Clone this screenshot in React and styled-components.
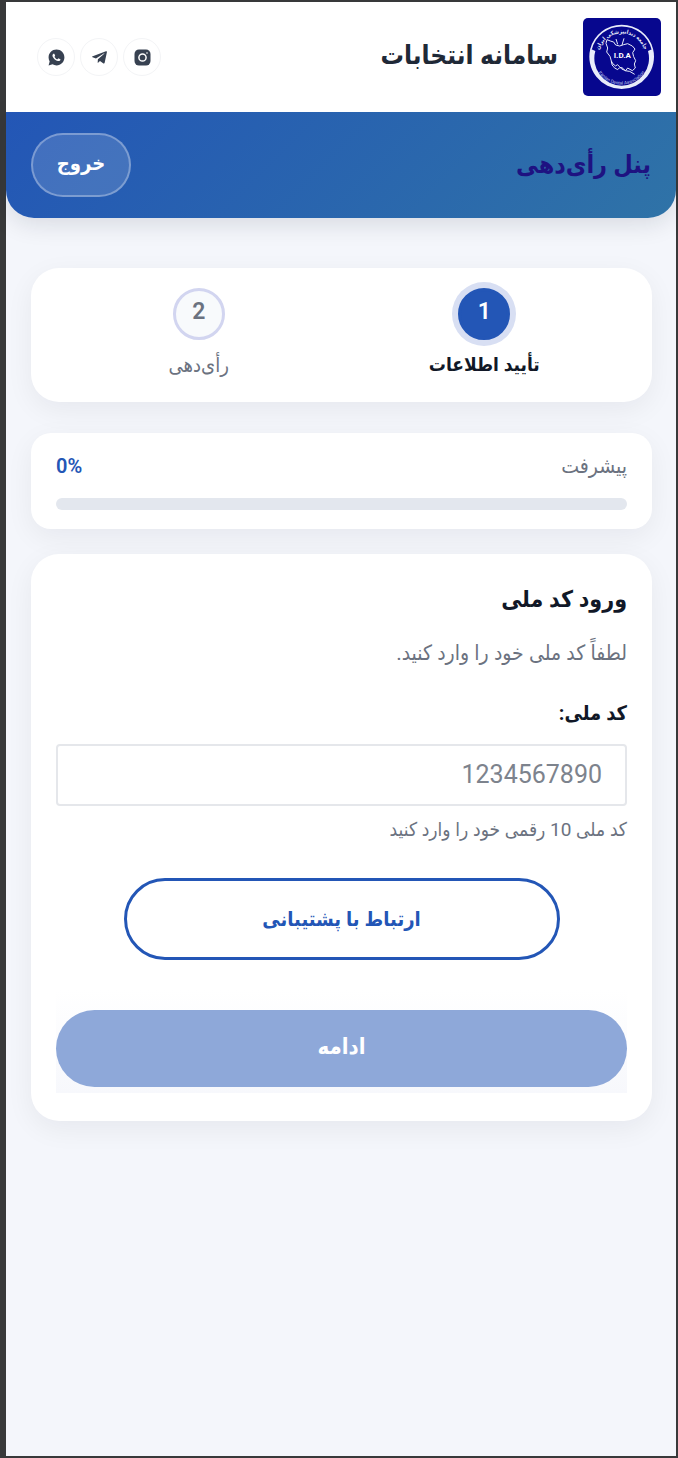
import React, { useState } from "react";
import styled, { createGlobalStyle } from "styled-components";
import { RiWhatsappFill } from "react-icons/ri";
import { FaTelegramPlane } from "react-icons/fa";

const GlobalStyle = createGlobalStyle`
  *, *::before, *::after { box-sizing: border-box; }
  body {
    margin: 0;
    background: #38393a;
    font-family: Roboto, "DejaVu Sans Condensed", "DejaVu Sans", sans-serif;
    color: #111827;
  }
  h1, h2, p { margin: 0; }
  button, input { font-family: inherit; }
`;

const Frame = styled.div`
  min-height: 100vh;
  display: flex;
  padding: 2px 2px 2px 6px;
`;

const Page = styled.div`
  flex: 1;
  min-width: 0;
  background: #f4f6fb;
`;

const SiteHeader = styled.header`
  position: relative;
  z-index: 1;
  display: flex;
  align-items: center;
  justify-content: space-between;
  height: 110px;
  padding: 0 15px 0 31px;
  background: #fff;
`;

const Brand = styled.div`
  display: flex;
  align-items: center;
  gap: 25px;
`;

const LogoMark = styled.svg`
  display: block;
  width: 78px;
  height: 78px;
`;

const BrandName = styled.span`
  padding-bottom: 4px;
  font-size: 26px;
  line-height: 36px;
  font-weight: 700;
  color: #1f2937;
`;

const SocialList = styled.nav`
  display: flex;
  gap: 5px;
`;

const SocialLink = styled.a`
  display: grid;
  place-items: center;
  width: 38px;
  height: 38px;
  border: 1px solid #f3f4f6;
  border-radius: 50%;
  color: #374151;
`;

const Hero = styled.section`
  display: flex;
  align-items: center;
  justify-content: space-between;
  padding: 21px 25px;
  border-radius: 0 0 28px 28px;
  background: linear-gradient(135deg, #2356b6, #2f73a7);
  box-shadow: 0 6px 24px rgba(15, 23, 42, 0.12);
`;

const HeroTitle = styled.h1`
  font-size: 25px;
  line-height: 36px;
  font-weight: 700;
  color: #1e1281;
`;

const LogoutButton = styled.button`
  width: 100px;
  height: 64px;
  padding: 0 0 4px;
  border: 2px solid rgba(255, 255, 255, 0.3);
  border-radius: 32px;
  background: rgba(255, 255, 255, 0.14);
  font-size: 20px;
  font-weight: 700;
  color: #fff;
`;

const Content = styled.main`
  padding: 50px 24px 40px 25px;
`;

const Card = styled.section`
  border-radius: ${(p) => p.$radius || 28}px;
  background: #fff;
  box-shadow: 0 8px 28px rgba(15, 23, 42, 0.06);
`;

const StepsCard = styled(Card)`
  padding: 20px 25px 22px;
  margin-bottom: 31px;
`;

const StepList = styled.ol`
  display: flex;
  margin: 0;
  padding: 0;
  list-style: none;
`;

const Step = styled.li`
  flex: 1;
  display: flex;
  flex-direction: column;
  align-items: center;
  gap: 10px;
`;

const StepNumber = styled.span`
  display: grid;
  place-items: center;
  width: 52px;
  height: 52px;
  padding-bottom: 5px;
  border: 3px solid ${(p) => (p.$active ? "#2356b6" : "#d2d5f0")};
  border-radius: 50%;
  background: ${(p) => (p.$active ? "#2356b6" : "#f8fafc")};
  box-shadow: ${(p) => (p.$active ? "0 0 0 6px #d8dff3" : "none")};
  font-size: 23px;
  font-weight: 600;
  color: ${(p) => (p.$active ? "#fff" : "#6b7280")};
`;

const StepLabel = styled.span`
  font-size: ${(p) => (p.$active ? 19 : 20)}px;
  line-height: 30px;
  font-weight: ${(p) => (p.$active ? 700 : 400)};
  color: ${(p) => (p.$active ? "#111827" : "#6b7280")};
`;

const ProgressCard = styled(Card)`
  padding: 18px 25px 19px;
  margin-bottom: 25px;
`;

const ProgressHead = styled.div`
  display: flex;
  align-items: center;
  justify-content: space-between;
  height: 30px;
  margin-bottom: 17px;
  font-size: 21px;
  color: #6b7280;
`;

const ProgressValue = styled.span`
  font-size: 20px;
  font-weight: 600;
  color: #2356b6;
`;

const ProgressTrack = styled.div`
  height: 12px;
  border-radius: 6px;
  background: #e3e7ee;
  overflow: hidden;
`;

const ProgressFill = styled.div`
  height: 100%;
  background: #2356b6;
`;

const FormCard = styled(Card)`
  padding: 28px 25px;
`;

const FormTitle = styled.h2`
  font-size: 23px;
  line-height: 36px;
  font-weight: 700;
`;

const FormLead = styled.p`
  margin-top: 20px;
  font-size: 21px;
  line-height: 30px;
  color: #6b7280;
`;

const FieldLabel = styled.label`
  display: block;
  margin-top: 30px;
  font-size: 20px;
  line-height: 30px;
  font-weight: 700;
`;

const TextInput = styled.input`
  display: block;
  width: 100%;
  height: 62px;
  margin-top: 16px;
  padding: 0 23px 2px;
  border: 2px solid #e5e7eb;
  border-radius: 4px;
  background: #fff;
  font-size: 25px;
  text-align: right;
  color: #111827;
  &::placeholder { color: #7d838d; opacity: 1; }
`;

const Hint = styled.p`
  margin-top: 9px;
  font-size: 19px;
  line-height: 30px;
  color: #6b7280;
`;

const SupportButton = styled.button`
  display: block;
  width: 436px;
  max-width: 100%;
  height: 82px;
  margin: 33px auto 0;
  padding: 0;
  border: 3px solid #2356b6;
  border-radius: 41px;
  background: #fff;
  font-size: 20px;
  font-weight: 700;
  color: #2356b6;
`;

const Actions = styled.div`
  margin-top: 30px;
  padding: 20px 0 6px;
  background: linear-gradient(#fff, #f7f8fc);
`;

const ContinueButton = styled.button`
  display: block;
  width: 100%;
  height: 77px;
  padding: 0 0 4px;
  border: 0;
  border-radius: 39px;
  background: #8ea8d9;
  font-size: 22px;
  font-weight: 700;
  color: #fff;
`;

function AssociationLogo() {
  return (
    <LogoMark viewBox="0 0 234 234" role="img" aria-label="جامعه دندانپزشکی ایران">
      <defs>
        <path id="logo-top" d="M45 117A71 71 0 0 1 187 117" />
        <path id="logo-bottom" d="M33 117A83 83 0 0 0 199 117" />
      </defs>
      <rect width="234" height="234" rx="15" fill="#07078e" />
      <path d="M24 94A95 95 0 0 1 208 94" fill="none" stroke="#e8ecfa" strokeWidth="5" />
      <path d="M22 92L37 99A82 82 0 1 0 195 99L210 92A97 97 0 1 1 22 92Z" fill="#e8ecfa" />
      <text fontSize="17" fontWeight="700" fill="#e8ecfa" textAnchor="middle" direction="rtl">
        <textPath href="#logo-top" startOffset="50%">جامعه دندانپزشکی ایران</textPath>
      </text>
      <text fontSize="14" fill="#c9d2f2" textAnchor="middle" direction="ltr">
        <textPath href="#logo-bottom" startOffset="50%">Iranian Dental Association</textPath>
      </text>
      <path
        d="M72 65L69 76 74 90 71 102 81 115 85 129 90 138 98 144 103 140 110 146 116 153 128 158 134 150 148 158 157 150 154 138 158 128 152 116 149 104 156 93 148 84 134 77 122 80 110 84 98 81 92 72 82 69ZM99 63L104 79M123 61L117 81M85 129Q84 146 104 155Q114 140 126 158Q140 157 155 169"
        fill="none"
        stroke="#e8ecfa"
        strokeWidth="3"
        strokeLinejoin="round"
      />
      <text x="118" y="119" fontSize="24" fontWeight="700" fill="#fff" textAnchor="middle" direction="ltr">
        I.D.A
      </text>
    </LogoMark>
  );
}

function InstagramIcon() {
  return (
    <svg width="17" height="17" viewBox="0 0 17 17" aria-hidden="true">
      <rect x="0.5" y="0.5" width="16" height="16" rx="4.5" fill="currentColor" />
      <circle cx="8.5" cy="8.5" r="3.6" fill="none" stroke="#fff" strokeWidth="1.5" />
      <circle cx="13" cy="4" r="0.8" fill="#fff" />
    </svg>
  );
}

const steps = [
  { number: 1, label: "تأیید اطلاعات", active: true },
  { number: 2, label: "رأی‌دهی", active: false },
];

export default function App() {
  const [code, setCode] = useState("");
  const progress = 0;
  return (
    <Frame dir="rtl" lang="fa">
      <GlobalStyle />
      <Page>
        <SiteHeader>
          <Brand>
            <AssociationLogo />
            <BrandName>سامانه انتخابات</BrandName>
          </Brand>
          <SocialList>
            <SocialLink href="#instagram" aria-label="اینستاگرام"><InstagramIcon /></SocialLink>
            <SocialLink href="#telegram" aria-label="تلگرام"><FaTelegramPlane size={17} /></SocialLink>
            <SocialLink href="#whatsapp" aria-label="واتساپ"><RiWhatsappFill size={19} /></SocialLink>
          </SocialList>
        </SiteHeader>
        <Hero>
          <HeroTitle>پنل رأی‌دهی</HeroTitle>
          <LogoutButton type="button">خروج</LogoutButton>
        </Hero>
        <Content>
          <StepsCard>
            <StepList>
              {steps.map((s) => (
                <Step key={s.number} aria-current={s.active ? "step" : undefined}>
                  <StepNumber $active={s.active}>{s.number}</StepNumber>
                  <StepLabel $active={s.active}>{s.label}</StepLabel>
                </Step>
              ))}
            </StepList>
          </StepsCard>
          <ProgressCard $radius={20}>
            <ProgressHead>
              <span>پیشرفت</span>
              <ProgressValue dir="ltr">{progress}%</ProgressValue>
            </ProgressHead>
            <ProgressTrack role="progressbar" aria-label="پیشرفت" aria-valuenow={progress}>
              <ProgressFill style={{ width: `${progress}%` }} />
            </ProgressTrack>
          </ProgressCard>
          <FormCard as="form" onSubmit={(e) => e.preventDefault()}>
            <FormTitle>ورود کد ملی</FormTitle>
            <FormLead>لطفاً کد ملی خود را وارد کنید.</FormLead>
            <FieldLabel htmlFor="national-code">کد ملی:</FieldLabel>
            <TextInput
              id="national-code"
              inputMode="numeric"
              maxLength={10}
              placeholder="1234567890"
              aria-describedby="national-code-hint"
              value={code}
              onChange={(e) => setCode(e.target.value)}
            />
            <Hint id="national-code-hint">کد ملی 10 رقمی خود را وارد کنید</Hint>
            <SupportButton type="button">ارتباط با پشتیبانی</SupportButton>
            <Actions>
              <ContinueButton type="submit" disabled={code.length < 10}>ادامه</ContinueButton>
            </Actions>
          </FormCard>
        </Content>
      </Page>
    </Frame>
  );
}
